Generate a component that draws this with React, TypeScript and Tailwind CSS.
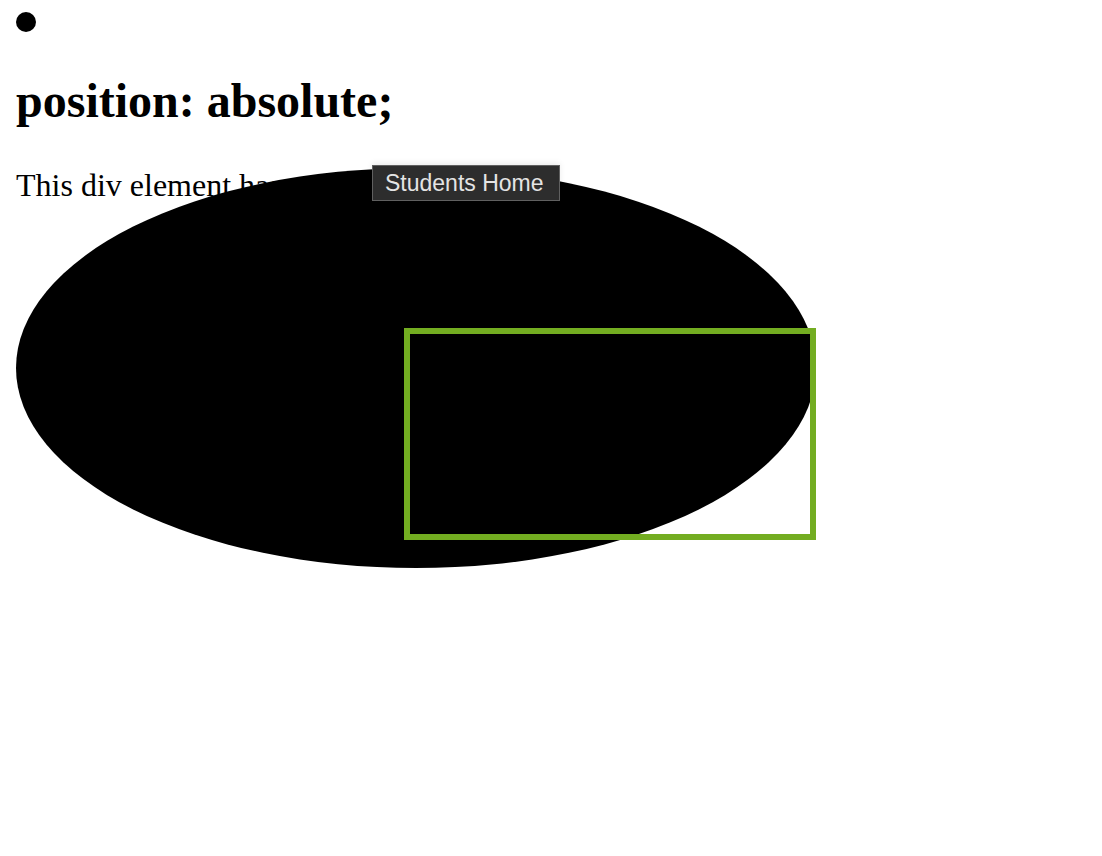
import React from "react";

export default function App() {
  return (
    <div
      className="relative w-[1102px] h-[856px] bg-white text-black overflow-hidden"
      style={{ fontFamily: '"Liberation Serif", "Times New Roman", serif' }}
    >
      <div className="pl-[16px] pt-[12px]">
        <div className="w-[20px] h-[20px] rounded-full bg-black" />
        <h2 className="mt-[41px] text-[48px] leading-[55px] font-bold">position: absolute;</h2>
        <p className="mt-[39px] text-[32px] leading-[37px]">This div element has</p>
      </div>

      {/* relative ellipse container */}
      <div className="absolute left-[16px] top-[168px] w-[800px] h-[400px]">
        <div className="absolute inset-0 rounded-[50%] bg-black" />
        <div className="absolute right-0 top-[160px] w-[412px] h-[212px] border-[6px] border-[#73AD21]" />
      </div>

      {/* native-like tooltip */}
      <div
        className="absolute left-[372px] top-[165px] w-[188px] h-[36px] flex items-center pl-[12px] bg-[#2d2d2d] border border-[#606060] text-[#e4e4e4] text-[23px] shadow-[0_-2px_6px_rgba(0,0,0,0.08)]"
        style={{ fontFamily: '"Liberation Sans", Arial, sans-serif' }}
      >
        Students Home
      </div>
    </div>
  );
}
